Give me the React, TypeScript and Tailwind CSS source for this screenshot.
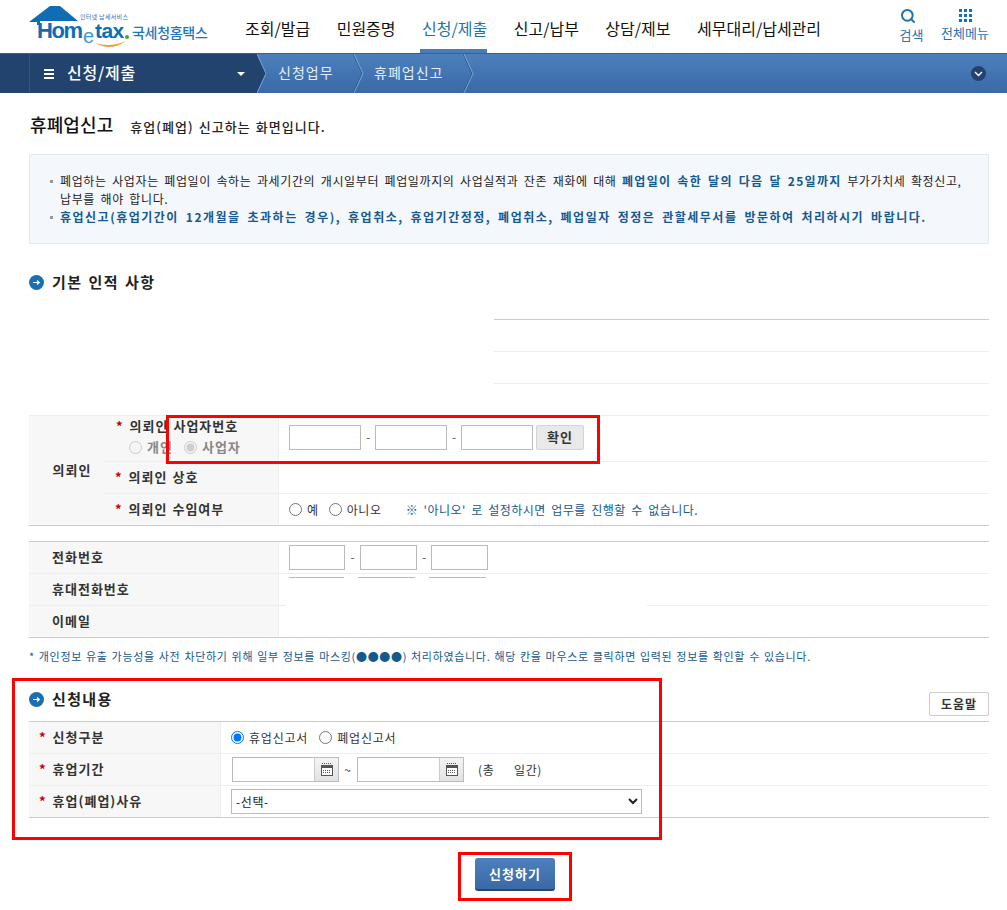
import { ReactNode } from 'react';
import { Search } from 'lucide-react';

const navItems = ['조회/발급', '민원증명', '신청/제출', '신고/납부', '상담/제보', '세무대리/납세관리'];

function Logo() {
  return (
    <div className="relative w-[180px] h-[48px] shrink-0 tracking-normal [word-spacing:0px]">
      <svg width="102" height="48" viewBox="0 0 102 48" className="absolute left-0 top-0">
        <path d="M0 17 L21 1 H31 L49 16 H11 V20 H8 V17 Z" fill="#0f6db5" />
        <path d="M66 38 Q82 47 97 36 Q82 43 66 38 Z" fill="#f0a030" />
        <circle cx="98" cy="32" r="2" fill="#3aa935" />
        <text x="8" y="33" fontFamily="Liberation Sans" fontWeight="700" fontSize="22" fill="#0f6db5" letterSpacing="-1.4">Hom</text>
        <text x="54" y="38" fontFamily="Liberation Sans" fontSize="20" fill="#3d9ad6">e</text>
        <text x="66" y="33" fontFamily="Liberation Sans" fontWeight="700" fontSize="21" fill="#0f6db5" letterSpacing="-0.6">tax</text>
      </svg>
      <span className="absolute left-[51px] top-[9px] text-[6px] leading-[6px] tracking-[0.3px] whitespace-nowrap text-[#2a72b0]">인터넷 납세서비스</span>
      <span className="absolute left-[103px] top-[18px] text-[14px] leading-[18px] font-medium tracking-[-0.3px] whitespace-nowrap text-[#1b78b8]">국세청홈택스</span>
    </div>
  );
}

function Chevron() {
  return (
    <svg width="12" height="39" viewBox="0 0 12 39" className="shrink-0">
      <path d="M0 0 L9 19.5 L0 39" fill="none" stroke="#2f5a90" strokeWidth="1" />
      <path d="M1 0 L10 19.5 L1 39" fill="none" stroke="#7ba4d4" strokeWidth="1" />
    </svg>
  );
}

function SectionTitle({ children }: { children: ReactNode }) {
  return (
    <div className="flex items-center gap-[8px] text-[15px] font-bold text-[#222] tracking-[1.35px] [word-spacing:1.5px]">
      <svg width="15" height="15" viewBox="0 0 15 15" className="shrink-0">
        <circle cx="7.5" cy="7.5" r="7.5" fill="#1b6fae" />
        <path d="M4 7.5 H10 M8 5.5 L10.3 7.5 L8 9.5" fill="none" stroke="#fff" strokeWidth="1.2" />
      </svg>
      <span>{children}</span>
    </div>
  );
}

function Star() {
  return <span className="text-[#c00000] font-bold mr-[7px] tracking-normal">*</span>;
}

function TextBox({ className }: { className: string }) {
  return <input type="text" className={`h-[25px] border border-[#bbb] bg-white ${className}`} />;
}

function Dash({ className }: { className: string }) {
  return <span className={`text-center text-[#555] tracking-normal ${className}`}>-</span>;
}

function CalendarField() {
  return (
    <div className="flex h-[25px] w-[107px] border border-[#bbb]">
      <input type="text" className="w-[81px] h-full bg-white" />
      <div className="flex-1 flex items-center justify-center bg-gradient-to-b from-[#f5f5f5] to-[#e2e2e2] border-l border-[#ccc]">
        <svg width="12" height="13" viewBox="0 0 12 13">
          <path d="M1 0.5 H11" stroke="#555" strokeWidth="1" strokeDasharray="1 1" />
          <rect x="0.5" y="2.5" width="11" height="10" fill="#fff" stroke="#555" />
          <rect x="1" y="3" width="10" height="2" fill="#555" />
          <path d="M2 7.5 H10 M2 9.5 H10" stroke="#555" strokeWidth="1" strokeDasharray="1 1" />
        </svg>
      </div>
    </div>
  );
}

function Radio({ label, checked, disabled }: { label: string; checked?: boolean; disabled?: boolean }) {
  return (
    <label className={`flex items-center gap-[5px] ${disabled ? 'text-[#888] text-[13px] font-bold tracking-[1px]' : 'text-[#333]'}`}>
      <input type="radio" defaultChecked={checked} disabled={disabled} className="w-[13px] h-[13px] m-0" />
      {label}
    </label>
  );
}

const labelText = 'text-[13px] font-bold tracking-[1px] [word-spacing:1px] pb-[2px]';

export default function App() {
  return (
    <div className="relative w-[1007px] h-[910px] overflow-hidden bg-white text-[12px] text-[#333] tracking-[0.62px] [word-spacing:2.2px] font-['Noto_Sans_CJK_KR','Noto_Sans',sans-serif]">
      {/* 상단 헤더 */}
      <header className="flex h-[53px] pl-[29px] pr-[18px]">
        <div className="pt-[5px] w-[216px] shrink-0">
          <Logo />
        </div>
        <nav className="flex gap-[26.5px] text-[16px] tracking-normal [word-spacing:0px] text-[#111]">
          {navItems.map((item) => (
            <div
              key={item}
              className={`relative flex items-center h-[53px] pt-[2px] whitespace-nowrap ${item === '신청/제출' ? 'text-[#1f73a8]' : ''}`}
            >
              {item}
              {item === '신청/제출' && <div className="absolute -left-[2px] right-0 bottom-0 h-[4px] bg-[#4a7db8]" />}
            </div>
          ))}
        </nav>
        <div className="ml-auto flex gap-[17px] text-[#1f73b5] text-[13px] tracking-normal">
          <div className="flex flex-col items-center pt-[8px] w-[25px]">
            <Search size={16} strokeWidth={3} className="self-start ml-[1px]" />
            <span className="mt-[2px] leading-[17px] whitespace-nowrap">검색</span>
          </div>
          <div className="flex flex-col items-center pt-[9px] w-[48px]">
            <div className="grid grid-cols-3 gap-[2px] w-[13px] h-[13px]">
              {Array.from({ length: 9 }).map((_, i) => (
                <div key={i} className="bg-[#1272b8] w-[3px] h-[3px]" />
              ))}
            </div>
            <span className="mt-[2px] leading-[17px] whitespace-nowrap">전체메뉴</span>
          </div>
        </div>
      </header>

      {/* 위치 바 */}
      <div className="flex items-center h-[40px] border-t border-[#36609a] bg-gradient-to-b from-[#4c80bd] to-[#3a69a6] text-white text-[14px] tracking-[1px]">
        <div className="flex h-full w-[257px] shrink-0 bg-[#23436f]">
          <div className="w-[30px] shrink-0 border-r border-[#2f5585]" />
          <div className="flex flex-1 items-center pl-[14px] pr-[12px]">
            <div className="flex flex-col gap-[2px] w-[10px] mr-[13px]">
              <div className="h-[2px] bg-white" />
              <div className="h-[2px] bg-white" />
              <div className="h-[2px] bg-white" />
            </div>
            <span className="text-[16px] font-medium tracking-[0.8px] mb-[3px]">신청/제출</span>
            <div className="ml-auto w-0 h-0 border-x-[4px] border-x-transparent border-t-[4px] border-t-white" />
          </div>
        </div>
        <svg width="9" height="39" viewBox="0 0 9 39" className="shrink-0">
          <path d="M0 0 L9 19.5 L0 39 Z" fill="#23436f" />
          <path d="M0 0 L9 19.5 L0 39" fill="none" stroke="#7ba4d4" strokeWidth="1" />
        </svg>
        <span className="ml-[12px] mb-[3px] w-[75px] text-[#e6eef8] whitespace-nowrap">신청업무</span>
        <Chevron />
        <span className="ml-[9px] mb-[3px] w-[89px] text-[#e6eef8] whitespace-nowrap">휴폐업신고</span>
        <Chevron />
        <div className="ml-auto mr-[21px] flex items-center justify-center w-[15px] h-[15px] rounded-full bg-[#24426c]">
          <svg width="9" height="6" viewBox="0 0 9 6">
            <path d="M1 1 L4.5 4.5 L8 1" fill="none" stroke="#fff" strokeWidth="1.4" />
          </svg>
        </div>
      </div>

      <main className="pl-[29px] pr-[18px]">
        {/* 제목 */}
        <div className="flex items-baseline gap-[17px] pt-[18px] pl-[1px] h-[61px]">
          <h1 className="text-[18px] font-medium text-[#111] tracking-[0.1px]">휴폐업신고</h1>
          <p className="text-[13px] font-medium text-[#222] tracking-[1.05px] [word-spacing:1px]">휴업(폐업) 신고하는 화면입니다.</p>
        </div>

        {/* 안내 */}
        <div className="h-[90px] border border-[#e3e8f2] bg-[#f4f7fc] pt-[17px] pl-[19px] pr-[20px] leading-[18px] text-[#222]">
          <div className="flex">
            <div className="w-[11px] shrink-0">
              <div className="w-[3px] h-[3px] ml-[1px] mt-[8px] bg-[#999]" />
            </div>
            <p>
              폐업하는 사업자는 폐업일이 속하는 과세기간의 개시일부터 폐업일까지의 사업실적과 잔존 재화에 대해{' '}
              <b className="text-[#15598f] tracking-[1.3px] [word-spacing:2px]">폐업일이 속한 달의 다음 달 25일까지</b> 부가가치세 확정신고, 납부를 해야 합니다.
            </p>
          </div>
          <div className="flex">
            <div className="w-[11px] shrink-0">
              <div className="w-[3px] h-[3px] ml-[1px] mt-[8px] bg-[#999]" />
            </div>
            <p className="font-bold text-[#15598f] whitespace-nowrap tracking-[1.5px] [word-spacing:2.7px]">
              휴업신고(휴업기간이 12개월을 초과하는 경우), 휴업취소, 휴업기간정정, 폐업취소, 폐업일자 정정은 관할세무서를 방문하여 처리하시기 바랍니다.
            </p>
          </div>
        </div>

        {/* 기본 인적 사항 */}
        <div className="mt-[27px] h-[48px]">
          <SectionTitle>기본 인적 사항</SectionTitle>
        </div>
        <div className="ml-[465px] h-[96px]">
          <div className="h-[32px] border-t border-[#ccc]" />
          <div className="h-[32px] border-t border-[#eee]" />
          <div className="h-[32px] border-t border-[#eee]" />
        </div>

        {/* 의뢰인 */}
        <div className="flex border-t border-b border-t-[#eee] border-b-[#ccc] h-[111px]">
          <div className={`w-[76px] shrink-0 flex items-center justify-center pl-[10px] bg-[#f7f7f7] ${labelText}`}>의뢰인</div>
          <div className="flex-1 flex flex-col">
            <div className="flex h-[46px] border-b border-[#eee]">
              <div className={`w-[174px] shrink-0 bg-[#f7f7f7] border-r border-[#eee] pl-[11px] leading-[20px] ${labelText}`}>
                <div><Star />의뢰인 사업자번호</div>
                <div className="flex gap-[11px] mt-[1px] ml-[13px] [word-spacing:0px]">
                  <Radio label="개인" disabled />
                  <Radio label="사업자" checked disabled />
                </div>
              </div>
              <div className="flex items-center pl-[10px] pb-[3px]">
                <TextBox className="w-[72px]" />
                <Dash className="w-[14px]" />
                <TextBox className="w-[72px]" />
                <Dash className="w-[14px]" />
                <TextBox className="w-[72px]" />
                <button className="ml-[3px] w-[48px] h-[25px] bg-[#e9e9e9] border border-[#d5d5d5] rounded-[2px] text-[13px] font-bold tracking-[1px] text-[#333]">확인</button>
              </div>
            </div>
            <div className="flex h-[32px] border-b border-[#eee]">
              <div className={`w-[174px] shrink-0 flex items-center bg-[#f7f7f7] border-r border-[#eee] pl-[10px] ${labelText}`}>
                <Star />의뢰인 상호
              </div>
            </div>
            <div className="flex flex-1">
              <div className={`w-[174px] shrink-0 flex items-center bg-[#f7f7f7] border-r border-[#eee] pl-[10px] ${labelText}`}>
                <Star />의뢰인 수임여부
              </div>
              <div className="flex items-center pl-[10px] gap-[10px]">
                <Radio label="예" />
                <Radio label="아니오" />
                <span className="ml-[14px] text-[#15598f] whitespace-nowrap tracking-[0.5px]">※ '아니오' 로 설정하시면 업무를 진행할 수 없습니다.</span>
              </div>
            </div>
          </div>
        </div>

        {/* 연락처 */}
        <div className="mt-[15px] border-t border-b border-[#ccc] h-[97px]">
          <div className="flex h-[32px]">
            <div className={`w-[250px] shrink-0 flex items-center pl-[23px] bg-[#f7f7f7] border-r border-b border-[#eee] ${labelText}`}>전화번호</div>
            <div className="flex-1 flex items-center pl-[10px] pb-[1px] border-b border-[#eee]">
              <TextBox className="w-[56px]" />
              <Dash className="w-[15px]" />
              <TextBox className="w-[57px]" />
              <Dash className="w-[14px]" />
              <TextBox className="w-[57px]" />
            </div>
          </div>
          <div className="flex h-[32px]">
            <div className={`w-[250px] shrink-0 flex items-center pl-[23px] bg-[#f7f7f7] border-r border-b border-[#eee] ${labelText}`}>휴대전화번호</div>
            <div className="relative w-[368px] shrink-0">
              <div className="w-[7px] absolute left-0 bottom-0 border-b border-[#eee]" />
              <div className="flex gap-[14px] pl-[10px] pt-[3px]">
                <div className="w-[55px] border-t border-[#bbb]" />
                <div className="w-[57px] border-t border-[#bbb]" />
                <div className="w-[57px] border-t border-[#bbb]" />
              </div>
            </div>
            <div className="flex-1 border-b border-[#eee]" />
          </div>
          <div className="flex h-[31px]">
            <div className={`w-[250px] shrink-0 flex items-center pl-[23px] bg-[#f7f7f7] border-r border-[#eee] ${labelText}`}>이메일</div>
          </div>
        </div>
        <p className="mt-[10px] text-[11px] leading-[16px] text-[#15598f] whitespace-nowrap tracking-[0.68px] [word-spacing:0.85px]">
          * 개인정보 유출 가능성을 사전 차단하기 위해 일부 정보를 마스킹(●●●●) 처리하였습니다. 해당 칸을 마우스로 클릭하면 입력된 정보를 확인할 수 있습니다.
        </p>

        {/* 신청내용 */}
        <div className="flex items-start justify-between mt-[28px] h-[29px]">
          <div className="-mt-[4px]">
            <SectionTitle>신청내용</SectionTitle>
          </div>
          <button className="w-[60px] h-[24px] border border-[#ccc] rounded-[2px] bg-white font-bold text-[#333] tracking-[1px]">도움말</button>
        </div>
        <div className="border-t border-b border-[#ccc] h-[97px]">
          <div className="flex h-[32px] border-b border-[#eee]">
            <div className={`w-[192px] shrink-0 flex items-center pl-[10px] bg-[#f7f7f7] border-r border-[#eee] ${labelText}`}>
              <Star />신청구분
            </div>
            <div className="flex items-center pl-[10px] gap-[11px] tracking-[0.8px]">
              <Radio label="휴업신고서" checked />
              <Radio label="폐업신고서" />
            </div>
          </div>
          <div className="flex h-[32px] border-b border-[#eee]">
            <div className={`w-[192px] shrink-0 flex items-center pl-[10px] bg-[#f7f7f7] border-r border-[#eee] ${labelText}`}>
              <Star />휴업기간
            </div>
            <div className="flex items-center pl-[11px]">
              <CalendarField />
              <span className="w-[18px] text-center">~</span>
              <CalendarField />
              <span className="ml-[14px] whitespace-pre [word-spacing:1.6px]">(총    일간)</span>
            </div>
          </div>
          <div className="flex h-[31px]">
            <div className={`w-[192px] shrink-0 flex items-center pl-[10px] bg-[#f7f7f7] border-r border-[#eee] ${labelText}`}>
              <Star />휴업(폐업)사유
            </div>
            <div className="flex items-center pl-[10px]">
              <select className="w-[411px] h-[25px] border border-[#bbb] bg-white text-[#222]">
                <option>-선택-</option>
              </select>
            </div>
          </div>
        </div>

        <div className="flex justify-center pl-[12px] mt-[40px]">
          <button className="w-[80px] h-[33px] rounded-[3px] bg-gradient-to-b from-[#4c80bd] to-[#3a69a6] border-b-2 border-[#24466f] text-white text-[13px] font-bold tracking-[1px]">
            신청하기
          </button>
        </div>
      </main>

      {/* 빨간 표시 */}
      <div className="absolute left-[166px] top-[415px] w-[434px] h-[49px] border-[3px] border-[#f00] pointer-events-none" />
      <div className="absolute left-[12px] top-[678px] w-[650px] h-[162px] border-[3px] border-[#f00] pointer-events-none" />
      <div className="absolute left-[458px] top-[852px] w-[114px] h-[49px] border-[3px] border-[#f00] pointer-events-none" />
    </div>
  );
}
